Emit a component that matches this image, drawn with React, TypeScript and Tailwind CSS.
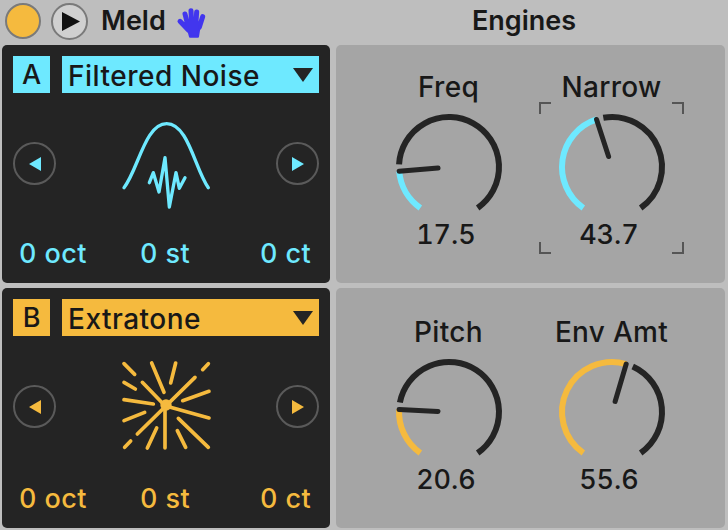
import React from 'react';

const CYAN = '#6ee9ff';
const ORANGE = '#f5ba3e';
const DARK = '#242424';

// point on the dial, angle in degrees clockwise from the top
const polar = (r: number, deg: number) => {
  const a = (deg * Math.PI) / 180;
  return { x: 60 + r * Math.sin(a), y: 60 - r * Math.cos(a) };
};

const arc = (r: number, from: number, to: number) => {
  const s = polar(r, from);
  const e = polar(r, to);
  const large = to - from > 180 ? 1 : 0;
  return `M${s.x} ${s.y}A${r} ${r} 0 ${large} 1 ${e.x} ${e.y}`;
};

interface KnobProps {
  label: string;
  value: string;
  angle: number;
  color: string;
  focused?: boolean;
}

const Knob: React.FC<KnobProps> = ({ label, value, angle, color, focused }) => {
  const inner = polar(11, angle);
  const tip = polar(50, angle);
  return (
    <div className="relative flex w-[163px] flex-col items-center">
      <div className="h-[34px] text-[28px] leading-[34px] tracking-[0.3px] text-[#181818]">{label}</div>
      <svg width="120" height="120" viewBox="0 0 120 120" className="mt-[3px] -mb-[8px]">
        <path d={arc(50, -145, angle)} fill="none" stroke={color} strokeWidth="6" />
        <path d={arc(50, angle + 8, 145)} fill="none" stroke={DARK} strokeWidth="6" />
        <line x1={inner.x} y1={inner.y} x2={tip.x} y2={tip.y} stroke={DARK} strokeWidth="5" strokeLinecap="round" />
      </svg>
      <div className="h-[32px] pr-[5px] text-[27px] leading-[32px] tabular-nums text-[#181818]">{value}</div>
      {focused && (
        <>
          <span className="absolute left-[9px] top-[32px] h-[12px] w-[12px] border-l-2 border-t-2 border-[#555]" />
          <span className="absolute right-[9px] top-[32px] h-[12px] w-[12px] border-r-2 border-t-2 border-[#555]" />
          <span className="absolute left-[9px] top-[172px] h-[12px] w-[12px] border-b-2 border-l-2 border-[#555]" />
          <span className="absolute right-[9px] top-[172px] h-[12px] w-[12px] border-b-2 border-r-2 border-[#555]" />
        </>
      )}
    </div>
  );
};

const NoiseIcon = () => (
  <svg width="110" height="100" viewBox="0 0 330 300" fill="none" stroke={CYAN} strokeLinecap="round" strokeLinejoin="round">
    <path d="M42 230C85 175 105 38 170 38C235 38 255 175 295 230" strokeWidth="10" />
    <path d="M118 215L130 185L147 243L165 140L178 288L198 185L208 232L225 200" strokeWidth="10" />
  </svg>
);

const RAYS = [
  [42, 44, 74, 76],
  [42, 100, 76, 120],
  [42, 152, 130, 165],
  [42, 215, 104, 190],
  [44, 295, 62, 276],
  [125, 42, 162, 130],
  [197, 42, 182, 102],
  [295, 44, 278, 62],
  [97, 100, 165, 170],
  [255, 85, 82, 255],
  [297, 127, 218, 155],
  [165, 170, 297, 207],
  [165, 170, 165, 297],
  [205, 208, 295, 295],
  [140, 237, 112, 297],
  [202, 245, 227, 295],
];

const BurstIcon = () => (
  <svg width="110" height="110" viewBox="0 0 330 330" fill="none" stroke={ORANGE} strokeLinecap="round">
    {RAYS.map((r, i) => (
      <line key={i} x1={r[0]} y1={r[1]} x2={r[2]} y2={r[3]} strokeWidth="11" />
    ))}
    <circle cx="168" cy="168" r="17" fill={ORANGE} stroke="none" />
  </svg>
);

const NavButton = ({ dir, color }: { dir: 'left' | 'right'; color: string }) => (
  <div className="flex h-[43px] w-[43px] items-center justify-center rounded-full border-2 border-[#5a5a5a]">
    <svg width="12" height="14" viewBox="0 0 12 14">
      <path d={dir === 'left' ? 'M0 7L12 0V14Z' : 'M12 7L0 0V14Z'} fill={color} />
    </svg>
  </div>
);

interface EngineProps {
  letter: string;
  name: string;
  color: string;
  height: string;
  footerGap: string;
  icon: React.ReactNode;
}

const Engine: React.FC<EngineProps> = ({ letter, name, color, height, footerGap, icon }) => (
  <div className={`flex flex-col rounded-[5px] bg-[#242424] px-[11px] pt-[11px] ${height}`}>
    <div className="flex gap-[12px] text-[#181818]">
      <div
        className="flex h-[37px] w-[37px] items-center justify-center pt-[2px] text-[27px]"
        style={{ backgroundColor: color }}
      >
        {letter}
      </div>
      <div
        className="flex h-[37px] flex-1 items-center justify-between pl-[6px] pr-[6px] pt-[2px] text-[28px] tracking-[0.5px]"
        style={{ backgroundColor: color }}
      >
        <span>{name}</span>
        <svg width="20" height="14" viewBox="0 0 20 14" className="-mt-[2px]">
          <path d="M0 0H20L10 14Z" fill="#242424" />
        </svg>
      </div>
    </div>
    <div className="flex h-[141px] items-center justify-between">
      <NavButton dir="left" color={color} />
      <div className="flex h-[110px] -translate-x-[1px] -translate-y-[3px] items-center">{icon}</div>
      <NavButton dir="right" color={color} />
    </div>
    <div
      className={`grid grid-cols-3 pl-[6px] pr-[8px] text-[27px] leading-[32px] tracking-[0.4px] tabular-nums ${footerGap}`}
      style={{ color }}
    >
      <span className="whitespace-nowrap">0 oct</span>
      <span className="text-center">0 st</span>
      <span className="text-right">0 ct</span>
    </div>
  </div>
);

const KnobPanel = ({ className, children }: { className: string; children: React.ReactNode }) => (
  <div className={`flex justify-center rounded-[5px] bg-[#a5a5a5] pr-[1px] ${className}`}>{children}</div>
);

const App: React.FC = () => {
  return (
    <div
      className="h-[530px] w-[728px] overflow-hidden bg-[#bebebe] font-medium"
      style={{ fontFamily: 'Inter, sans-serif' }}
    >
      <div className="flex h-[45px] items-center pb-[3px]">
        <div className="ml-[5px] h-[36px] w-[36px] rounded-full border-2 border-[#7a7a7a] bg-[#f5ba3e]" />
        <div className="ml-[10px] flex h-[37px] w-[37px] items-center justify-center rounded-full border-2 border-[#7a7a7a] bg-[#d0d0d0] pl-[3px]">
          <svg width="18" height="19" viewBox="0 0 18 19">
            <path d="M0 0L18 9.5L0 19Z" fill="#111" />
          </svg>
        </div>
        <span className="ml-[13px] w-[65px] text-[27px] font-semibold text-[#181818]">Meld</span>
        <svg width="50" height="44" viewBox="0 0 150 132" className="ml-[4px] mt-[1px]" fill="none" stroke="#4236ee" strokeWidth="15" strokeLinecap="round">
          <path d="M30 64L55 90M45 42L54 78M63 32L65 78M80 36L77 78M98 50L88 82" />
          <path d="M50 72H90L84 110H60Z" fill="#4236ee" strokeWidth="6" strokeLinejoin="round" />
        </svg>
        <span className="ml-[252px] text-[27px] font-semibold text-[#181818]">Engines</span>
      </div>
      <div className="grid grid-cols-[328px_389px] gap-x-[6px] gap-y-[5px] pl-[2px]">
        <Engine letter="A" name="Filtered Noise" color={CYAN} height="h-[238px]" footerGap="mt-[4px]" icon={<NoiseIcon />} />
        <KnobPanel className="h-[238px] pt-[25px]">
          <Knob label="Freq" value="17.5" angle={-95} color={CYAN} />
          <Knob label="Narrow" value="43.7" angle={-18} color={CYAN} focused />
        </KnobPanel>
        <Engine letter="B" name="Extratone" color={ORANGE} height="h-[240px]" footerGap="mt-[6px]" icon={<BurstIcon />} />
        <KnobPanel className="h-[240px] pt-[27px]">
          <Knob label="Pitch" value="20.6" angle={-87} color={ORANGE} />
          <Knob label="Env Amt" value="55.6" angle={16.5} color={ORANGE} />
        </KnobPanel>
      </div>
    </div>
  );
};

export default App;
